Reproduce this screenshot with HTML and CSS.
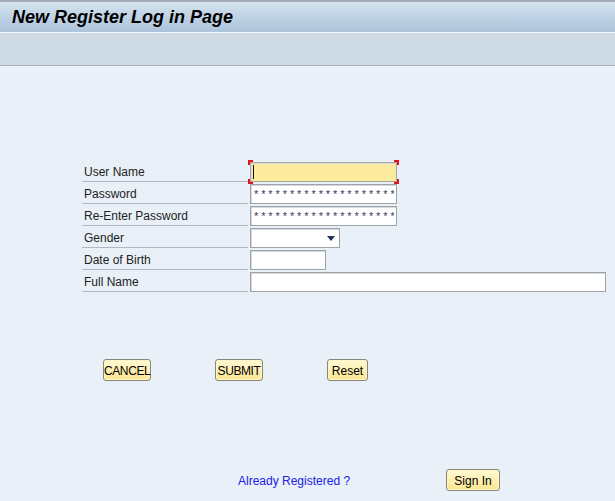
FILE: index.html
```html
<!DOCTYPE html>
<html lang="en">
<head>
<meta charset="utf-8">
<title>New Register Log in Page</title>
<link rel="stylesheet" href="styles.css">
</head>
<body>
<header class="header">
  <div class="titlebar"><h1 class="title">New Register Log in Page</h1></div>
  <div class="toolbar"></div>
</header>
<main class="content">
  <form class="reg-form">
    <div class="row">
      <label class="lbl">User Name</label>
      <div class="field"><span class="focus-ring"><input class="inp inp-md is-focused" type="text" value=""></span></div>
    </div>
    <div class="row">
      <label class="lbl">Password</label>
      <div class="field"><input class="inp inp-md inp-stars" type="text" value="********************"></div>
    </div>
    <div class="row">
      <label class="lbl">Re-Enter Password</label>
      <div class="field"><input class="inp inp-md inp-stars" type="text" value="********************"></div>
    </div>
    <div class="row">
      <label class="lbl">Gender</label>
      <div class="field"><div class="inp inp-sel"><svg class="caret" width="8" height="5" viewBox="0 0 8 5"><path d="M0 0H8L4 5Z" fill="#1f2f5c"/></svg></div></div>
    </div>
    <div class="row">
      <label class="lbl">Date of Birth</label>
      <div class="field"><input class="inp inp-sm" type="text" value=""></div>
    </div>
    <div class="row">
      <label class="lbl">Full Name</label>
      <div class="field"><input class="inp inp-lg" type="text" value=""></div>
    </div>
  </form>
  <div class="actions">
    <button class="btn btn-cancel" type="button">CANCEL</button>
    <button class="btn btn-submit" type="button">SUBMIT</button>
    <button class="btn btn-reset" type="button">Reset</button>
  </div>
  <div class="signin">
    <a class="link" href="#">Already Registered ?</a>
    <button class="btn btn-signin" type="button">Sign In</button>
  </div>
</main>
</body>
</html>
```
FILE: styles.css
```css
* { box-sizing: border-box; }
html, body { margin: 0; padding: 0; }
body {
  background: #e9f0f7;
  font-family: "Liberation Sans", Arial, sans-serif;
  font-size: 12px;
  color: #1c1c1c;
  width: 615px;
  height: 501px;
  overflow: hidden;
}
.header {
  border-top: 2px solid #a3abb7;
}
.titlebar {
  height: 31px;
  background: linear-gradient(#d4e3ef, #acc3db);
  border-bottom: 1px solid #f4f8fb;
  padding-left: 12px;
  display: flex;
  align-items: center;
}
.title {
  margin: 0;
  font-size: 18px;
  font-weight: bold;
  font-style: italic;
  color: #000;
  letter-spacing: 0;
}
.toolbar {
  height: 33px;
  background: #cfdce6;
  border-bottom: 1px solid #a6b2be;
}
.content {
  padding: 94px 0 0 82px;
}
.reg-form { margin: 0; }
.row {
  display: grid;
  grid-template-columns: 166px auto;
  column-gap: 2px;
  height: 22px;
}
.lbl {
  border-bottom: 1px solid #b1b8c0;
  padding: 5px 0 0 2px;
  line-height: 15px;
  color: #222;
}
.field {
  padding-top: 2px;
  display: flex;
  align-items: flex-start;
}
.inp {
  height: 20px;
  border: 1px solid #9ea3a8;
  box-shadow: inset 1px 1px 0 #d6d9dc;
  background: #fff;
  font-family: "Liberation Sans", Arial, sans-serif;
  font-size: 12px;
  padding: 0 2px;
  margin: 0;
  outline: none;
  display: block;
}
.inp-md { width: 147px; }
.inp-sm { width: 76px; }
.inp-lg { width: 356px; }
.inp-sel {
  width: 90px;
  display: flex;
  justify-content: flex-end;
  align-items: center;
  padding-right: 4px;
}
.caret { display: block; }
.inp-stars {
  letter-spacing: 2.9px;
  color: #3a3a5a;
  font-size: 11px;
  padding-left: 3px;
}
.focus-ring {
  display: block;
  margin: -2px;
  padding: 2px;
  background:
    linear-gradient(#e0141a, #e0141a) left top / 5px 2px no-repeat,
    linear-gradient(#e0141a, #e0141a) left top / 2px 5px no-repeat,
    linear-gradient(#e0141a, #e0141a) right top / 5px 2px no-repeat,
    linear-gradient(#e0141a, #e0141a) right top / 2px 5px no-repeat,
    linear-gradient(#e0141a, #e0141a) left bottom / 5px 2px no-repeat,
    linear-gradient(#e0141a, #e0141a) left bottom / 2px 5px no-repeat,
    linear-gradient(#e0141a, #e0141a) right bottom / 5px 2px no-repeat,
    linear-gradient(#e0141a, #e0141a) right bottom / 2px 5px no-repeat;
}
.is-focused {
  background:
    linear-gradient(#111, #111) 2px 2px / 1px 14px no-repeat,
    #fdeb9f;
  border-color: #a8a89a;
}
.actions {
  margin: 67px 0 0 21px;
  display: grid;
  grid-template-columns: 112px 112px 112px;
  height: 22px;
}
.btn {
  height: 22px;
  padding: 2px 0 0;
  border: 1px solid #878780;
  border-radius: 3px;
  background: linear-gradient(#fffbd6, #fde58e);
  box-shadow: inset 0 0 0 1px #fff6c6;
  font-family: "Liberation Sans", Arial, sans-serif;
  font-size: 12px;
  color: #000;
  text-align: center;
}
.btn-cancel { width: 48px; letter-spacing: -0.4px; }
.btn-submit { width: 48px; letter-spacing: -0.4px; }
.btn-reset { width: 41px; }
.btn-signin { width: 54px; }
.signin {
  margin: 88px 0 0 156px;
  display: grid;
  grid-template-columns: 208px auto;
  align-items: center;
  height: 22px;
}
.link {
  color: #2121e6;
  text-decoration: none;
  font-size: 12px;
  padding-top: 2px;
}
```
